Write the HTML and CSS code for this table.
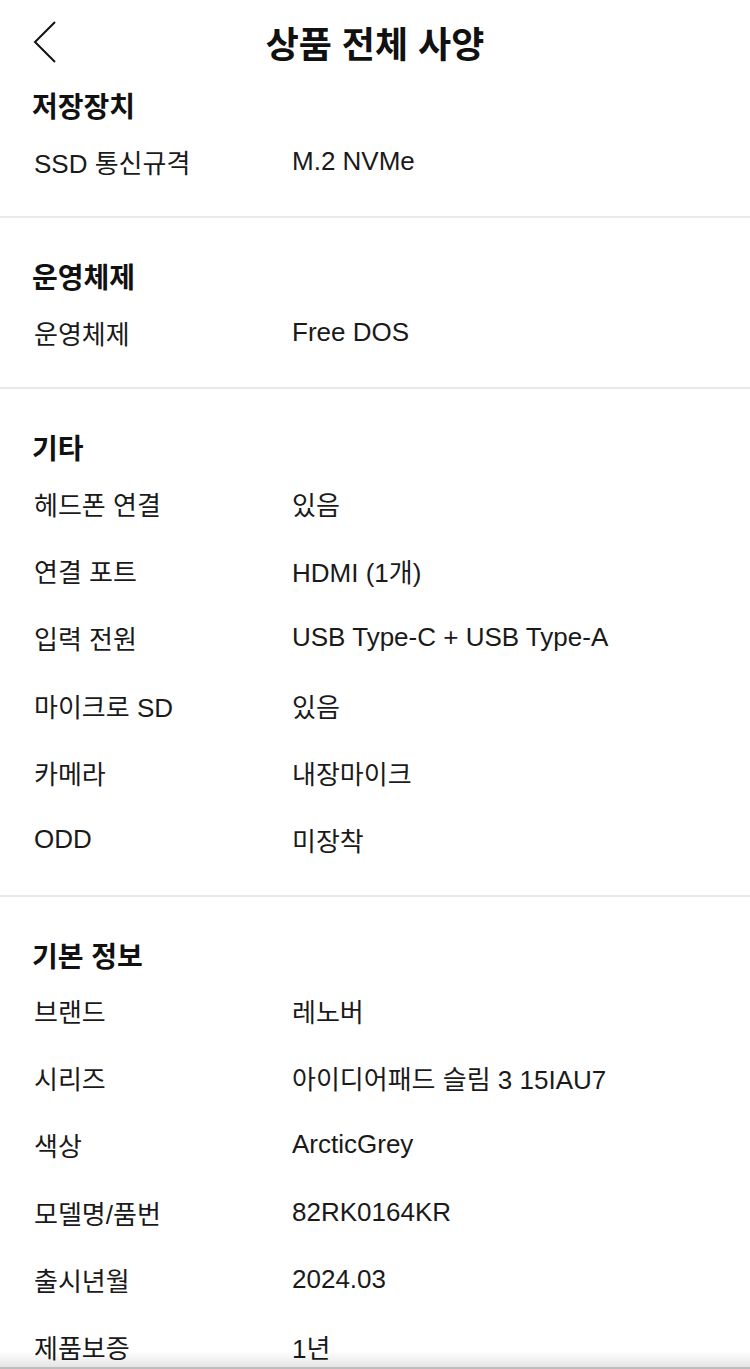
FILE: index.html
```html
<!DOCTYPE html>
<html>
<head>
  <meta charset="utf-8">
  <title>상품 전체 사양</title>
  <link rel="stylesheet" href="styles.css">
</head>
<body>
  <header class="topbar">
    <a class="back" href="#" aria-label="뒤로">
      <svg width="26" height="44" viewBox="0 0 26 44"><polyline points="23,2 3,22 23,42" fill="none" stroke="#111" stroke-width="2"/></svg>
    </a>
    <h1>상품 전체 사양</h1>
  </header>

  <section class="group">
    <h2>저장장치</h2>
    <div class="row"><span class="label">SSD 통신규격</span><span class="value">M.2 NVMe</span></div>
  </section>

  <section class="group">
    <h2>운영체제</h2>
    <div class="row"><span class="label">운영체제</span><span class="value">Free DOS</span></div>
  </section>

  <section class="group">
    <h2>기타</h2>
    <div class="row"><span class="label">헤드폰 연결</span><span class="value">있음</span></div>
    <div class="row"><span class="label">연결 포트</span><span class="value">HDMI (1개)</span></div>
    <div class="row"><span class="label">입력 전원</span><span class="value">USB Type-C + USB Type-A</span></div>
    <div class="row"><span class="label">마이크로 SD</span><span class="value">있음</span></div>
    <div class="row"><span class="label">카메라</span><span class="value">내장마이크</span></div>
    <div class="row"><span class="label">ODD</span><span class="value">미장착</span></div>
  </section>

  <section class="group">
    <h2>기본 정보</h2>
    <div class="row"><span class="label">브랜드</span><span class="value">레노버</span></div>
    <div class="row"><span class="label">시리즈</span><span class="value">아이디어패드 슬림 3 15IAU7</span></div>
    <div class="row"><span class="label">색상</span><span class="value">ArcticGrey</span></div>
    <div class="row"><span class="label">모델명/품번</span><span class="value">82RK0164KR</span></div>
    <div class="row"><span class="label">출시년월</span><span class="value">2024.03</span></div>
    <div class="row"><span class="label">제품보증</span><span class="value">1년</span></div>
  </section>

  <div class="bottom-fade"></div>
</body>
</html>
```

FILE: styles.css
```css
body { margin: 0; background: #fff; color: #111; font-family: "Liberation Sans", "Noto Sans CJK KR", sans-serif; overflow: hidden; }

.topbar { position: relative; height: 83px; display: flex; align-items: center; justify-content: center; }
.topbar h1 { margin: 0; font-size: 36px; font-weight: 700; }
.back { position: absolute; left: 32px; top: 20px; display: block; }
.back svg { display: block; }

.group { padding: 36px 0 22px; border-bottom: 2px solid #e9e9e9; }
.topbar + .group { padding-top: 0; }
.group:last-of-type { border-bottom: none; }
.group h2 { margin: 0; padding: 3px 0 0 32px; height: 41px; line-height: 44px; font-size: 28px; font-weight: 700; }

.row { display: grid; grid-template-columns: 258px 1fr; height: 67.2px; align-items: center; padding-left: 34px; padding-top: 1px; box-sizing: border-box; font-size: 26px; color: #1a1a1a; }

.bottom-fade { position: fixed; left: 0; right: 0; bottom: 0; height: 16px; background: linear-gradient(rgba(0,0,0,0), rgba(0,0,0,0.1)); border-bottom: 2px solid #bdbdbd; }
```
